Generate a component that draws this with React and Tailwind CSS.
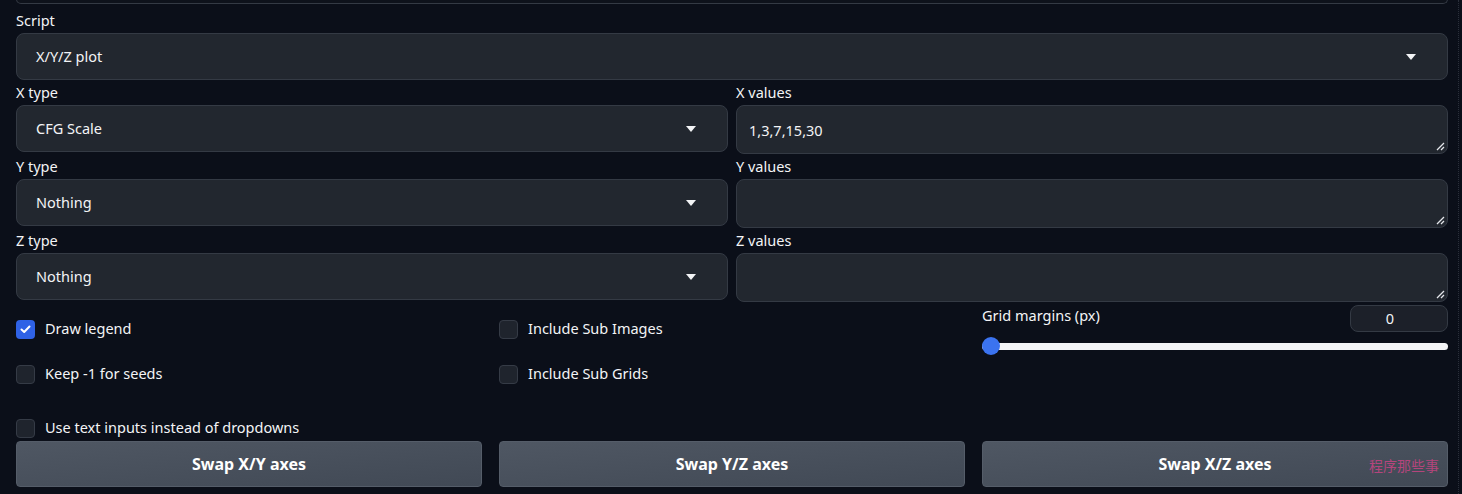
import React from "react";

const font = { fontFamily: '"Noto Sans", "Noto Sans CJK SC", sans-serif' };

function Caret() {
  return (
    <svg width="10" height="6" viewBox="0 0 10 6" className="shrink-0">
      <path d="M0 0 H10 L5 6 Z" fill="#f3f4f6" />
    </svg>
  );
}

function Dropdown({ value }) {
  return (
    <div className="h-[47px] rounded-lg border border-[#343a44] bg-[#22272f] flex items-center justify-between pl-[19px] pr-[31px]">
      <span className="text-[14.5px] text-[#f3f4f6]">{value}</span>
      <Caret />
    </div>
  );
}

function TextBox({ value }) {
  return (
    <div className="relative h-[49px] rounded-lg border border-[#343a44] bg-[#22272f] px-3 pt-[12px]">
      <span className="text-[14.5px] text-[#f3f4f6]">{value}</span>
      <svg width="9" height="9" viewBox="0 0 9 9" className="absolute right-[2px] bottom-[2px]">
        <path d="M1 8 L8 1 M5 8 L8 5" stroke="#e5e7eb" strokeWidth="1.3" />
      </svg>
    </div>
  );
}

function Check({ label, checked }) {
  return (
    <label className="flex items-center gap-[10px] h-[22px]">
      {checked ? (
        <span className="w-[19px] h-[19px] rounded-[4px] bg-[#2f62e6] flex items-center justify-center">
          <svg width="11" height="9" viewBox="0 0 11 9">
            <path d="M1.5 4.5 L4.2 7 L9.5 1.5" stroke="white" strokeWidth="2" fill="none" strokeLinecap="round" strokeLinejoin="round" />
          </svg>
        </span>
      ) : (
        <span className="w-[19px] h-[19px] rounded-[4px] bg-[#1f242d] border border-[#353b46]" />
      )}
      <span className="text-[14.5px] text-[#f3f4f6]">{label}</span>
    </label>
  );
}

function Field({ label, children }) {
  return (
    <div className="flex flex-col">
      <div className="text-[14.5px] text-[#f3f4f6] h-[25px] leading-[20px] pt-[2px]">{label}</div>
      {children}
    </div>
  );
}

export default function App() {
  const buttons = ["Swap X/Y axes", "Swap Y/Z axes", "Swap X/Z axes"];
  return (
    <div className="bg-[#0b0f19] w-[1462px] h-[494px] overflow-hidden relative" style={font}>
      <div className="absolute right-[3px] top-0 bottom-0 border-l border-dotted border-[#2a2f3a]" />
      <div className="pl-4 pr-[14px]">
        {/* cut-off box above */}
        <div className="h-[5px] -mt-[1px] rounded-b-lg border border-t-0 border-[#343a44] bg-[#0e121b] mb-[4px]" />

        <Field label="Script">
          <Dropdown value="X/Y/Z plot" />
        </Field>

        <div className="grid grid-cols-2 gap-x-2">
          <Field label="X type"><Dropdown value="CFG Scale" /></Field>
          <Field label="X values"><TextBox value="1,3,7,15,30" /></Field>
        </div>
        <div className="grid grid-cols-2 gap-x-2">
          <Field label="Y type"><Dropdown value="Nothing" /></Field>
          <Field label="Y values"><TextBox value="" /></Field>
        </div>
        <div className="grid grid-cols-2 gap-x-2">
          <Field label="Z type"><Dropdown value="Nothing" /></Field>
          <Field label="Z values"><TextBox value="" /></Field>
        </div>

        <div className="grid grid-cols-3 gap-x-[17px] mt-[3px]">
          <div className="flex flex-col pt-[13px] gap-[23px]">
            <Check label="Draw legend" checked />
            <Check label="Keep -1 for seeds" />
          </div>
          <div className="flex flex-col pt-[13px] gap-[23px]">
            <Check label="Include Sub Images" />
            <Check label="Include Sub Grids" />
          </div>
          <div className="flex flex-col">
            <div className="flex items-center justify-between h-[27px]">
              <span className="text-[14.5px] text-[#f3f4f6] pb-[5px]">Grid margins (px)</span>
              <div className="w-[98px] h-[27px] rounded-lg border border-[#343a44] bg-[#1c2029] flex items-center justify-center pr-[18px] text-[14.5px] text-[#f3f4f6]">
                0
              </div>
            </div>
            <div className="relative h-[16px] mt-[6px] flex items-center">
              <div className="w-full h-[7px] rounded-full bg-[#f4f5f7]" />
              <div className="absolute left-0 w-[18px] h-[18px] rounded-full bg-[#3b73f0]" />
            </div>
          </div>
        </div>

        <div className="mt-[32px]">
          <Check label="Use text inputs instead of dropdowns" />
        </div>

        <div className="grid grid-cols-3 gap-x-[17px] mt-[2px]">
          {buttons.map((b, i) => (
            <div
              key={b}
              className="relative h-[46px] rounded-sm border border-[#555d69] bg-gradient-to-br from-[#4f5763] to-[#414955] flex items-center justify-center"
            >
              <span className="text-[16px] font-bold text-white">{b}</span>
              {i === 2 && (
                <span className="absolute right-[8px] top-[13px] text-[14px] text-[#b4457c]">程序那些事</span>
              )}
            </div>
          ))}
        </div>
      </div>
    </div>
  );
}
